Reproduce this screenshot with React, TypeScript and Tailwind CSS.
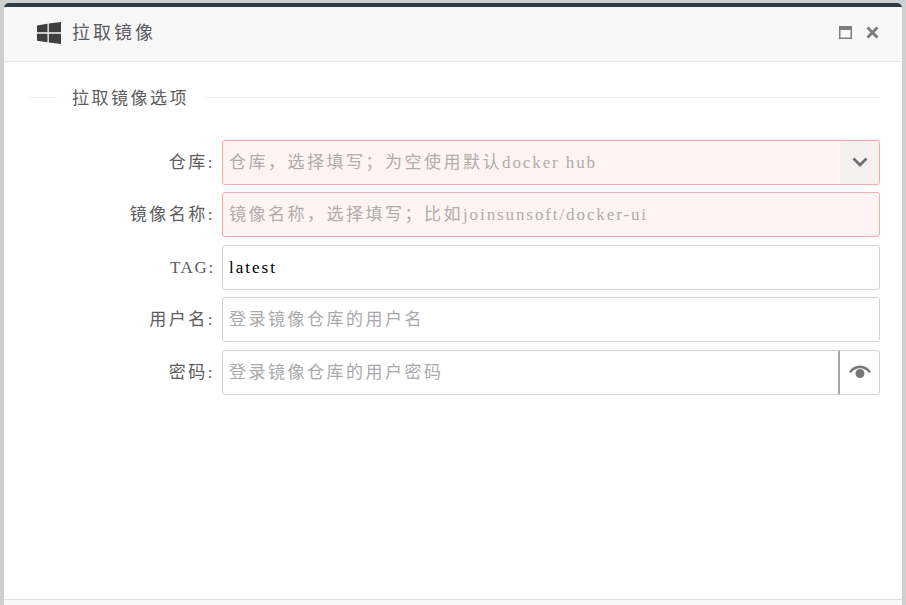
import React from 'react';

const fontStack = '[font-family:"Liberation_Serif","Noto_Sans_CJK_SC",serif]';

function ChevronDown() {
  return (
    <svg width="16" height="10" viewBox="0 0 16 10" fill="none">
      <path d="M1.500 1.500 8 8l6.500-6.500" stroke="#6f6f6f" strokeWidth="2.800" />
    </svg>
  );
}

function Eye() {
  return (
    <svg width="22" height="14" viewBox="0 0 22 14" fill="#777">
      <path d="M0 6.500C2.800 2.500 6.600 0.500 11 0.500s8.200 2 11 6L20 8C17.500 4.800 14.500 3.300 11 3.300S4.500 4.800 2 8z" />
      <circle cx="11" cy="8.500" r="4.500" />
    </svg>
  );
}

function FormRow({ label, placeholder, latin, value, error, suffix, divider, latinLabel }: {
  label: string;
  placeholder?: string;
  latin?: string;
  value?: string;
  error?: boolean;
  suffix?: React.ReactNode;
  divider?: boolean;
  latinLabel?: boolean;
}) {
  return (
    <div className="flex items-center h-[45px]">
      <label className={`w-[209px] pr-[7px] text-right text-[17px] text-[#5c5c5c] ${latinLabel ? 'tracking-[1.700px]' : 'tracking-[2.500px]'}`}>{label}</label>
      <div className={`flex-1 h-[45px] flex items-stretch rounded-[3px] border overflow-hidden ${error ? 'border-[#f8a9a9] bg-[#fff3f3]' : 'border-[#d2d2d2] bg-white'}`}>
        <div className="flex-1 flex items-center pl-[6px]">
          {value ? (
            <span className="pt-[1px] text-[17px] tracking-[2px] text-black">{value}</span>
          ) : (
            <span className={`text-[17px] tracking-[2.500px] ${error ? 'text-[#b0acac]' : 'text-[#a9a9a9]'}`}>
              {placeholder}
              {latin && <span className="tracking-[1.900px]">{latin}</span>}
            </span>
          )}
        </div>
        {suffix && (
          <div className={`flex items-center justify-center ${divider ? 'w-[41px] border-l-2 border-[#a8a8a8]' : 'w-[39px] bg-[#f5f1f1]'}`}>
            {suffix}
          </div>
        )}
      </div>
    </div>
  );
}

export default function App() {
  return (
    <div className={`w-[906px] h-[605px] overflow-hidden bg-[#cfcfcf] pt-[3px] px-[4px] ${fontStack}`}>
      <div className="h-[602px] flex flex-col rounded-t-[5px] border-t-[4px] border-[#2c3b41] bg-white overflow-hidden">
        <div className="h-[55px] shrink-0 flex items-center justify-between bg-[#f8f8f8] border-b border-[#e5e5e5] pl-[33px] pr-[23px] pb-[3px]">
          <div className="flex items-center gap-[11px]">
            <svg width="24" height="22" viewBox="0 0 24 22" fill="#3f3f3f">
              <path d="M0 3.400 10.500 1.700V10.300H0zM11.800 1.500 24 0V10.300H11.800zM0 11.700H10.500V20.300L0 18.700zM11.800 11.700H24V22L11.800 20.500z" />
            </svg>
            <span className="pt-[1px] text-[18px] tracking-[3px] text-[#5a5a62]">拉取镜像</span>
          </div>
          <div className="flex items-center gap-[14px]">
            <svg width="13" height="13" viewBox="0 0 13 13">
              <rect x="0.750" y="0.750" width="11.500" height="11.500" fill="none" stroke="#7d7d7d" strokeWidth="1.500" />
              <rect x="0" y="0" width="13" height="4" fill="#7d7d7d" />
            </svg>
            <svg width="13" height="13" viewBox="0 0 13 13">
              <path d="M1.500 1.500 11.500 11.500M11.500 1.500 1.500 11.500" stroke="#7d7d7d" strokeWidth="3" />
            </svg>
          </div>
        </div>

        <div className="flex-1 pl-[23px] pr-[22px] pt-[24px]">
          <div className="flex items-center h-[22px]">
            <div className="w-[30px] h-px bg-[#eeeeee]" />
            <span className="pl-[15px] pr-[14px] pt-[3px] text-[17px] tracking-[2.500px] text-[#5c5c5c]">拉取镜像选项</span>
            <div className="flex-1 h-px bg-[#eeeeee]" />
          </div>

          <div className="mt-[31.750px] flex flex-col gap-[7.500px] -ml-[14px]">
            <FormRow label="仓库:" placeholder="仓库，选择填写；为空使用默认" latin="docker hub" error suffix={<ChevronDown />} />
            <FormRow label="镜像名称:" placeholder="镜像名称，选择填写；比如" latin="joinsunsoft/docker-ui" error />
            <FormRow label="TAG:" value="latest" latinLabel />
            <FormRow label="用户名:" placeholder="登录镜像仓库的用户名" />
            <FormRow label="密码:" placeholder="登录镜像仓库的用户密码" suffix={<Eye />} divider />
          </div>
        </div>

        <div className="h-[6px] shrink-0 bg-[#f8f8f8] border-t border-[#dddddd]" />
      </div>
    </div>
  );
}
